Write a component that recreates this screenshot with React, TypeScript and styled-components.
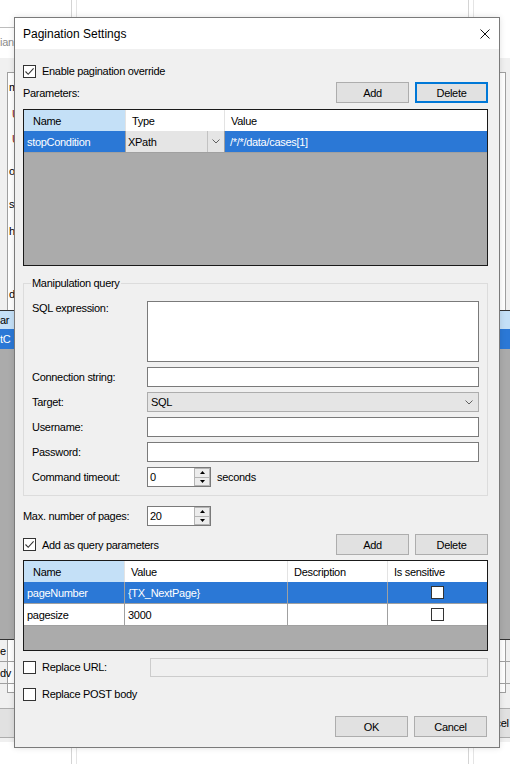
import * as React from 'react';
import styled, { createGlobalStyle } from 'styled-components';

const HIGHLIGHT = '#2b78d6';

const GlobalStyle = createGlobalStyle`
    html, body {
        margin: 0;
        padding: 0;
        background: #fff;
    }
    body {
        font-family: 'Liberation Sans', Arial, sans-serif;
        font-size: 11px;
        letter-spacing: -0.3px;
        color: #000;
    }
    * {
        box-sizing: border-box;
    }
`;

const paramCols = '102px 99px 1fr';
const queryCols = '101px 163px 100px 1fr';

const queryParams = [
    { name: 'pageNumber', value: '{TX_NextPage}', selected: true },
    { name: 'pagesize', value: '3000', selected: false },
];

// fragments of the owner window that peek out left of the dialog
const ownerLines = [
    { text: 'm', gap: 8, indent: 1, red: false },
    { text: 'U', gap: 13, indent: 4, red: true },
    { text: 'U', gap: 11, indent: 4, red: true },
    { text: 'ov', gap: 18, indent: 1, red: false },
    { text: 'se', gap: 19, indent: 1, red: false },
    { text: 'he', gap: 13, indent: 1, red: false },
    { text: 'dp', gap: 49, indent: 1, red: false },
];

const CheckMark = () => (
    <svg width="11" height="11" viewBox="0 0 11 11">
        <path d="M1.5 5.5 L4.2 8.3 L9.6 2.4" fill="none" stroke="#333" strokeWidth="1.1" />
    </svg>
);

const Chevron = () => (
    <svg width="8" height="5" viewBox="0 0 8 5">
        <path d="M0.5 0.5 L4 4 L7.5 0.5" fill="none" stroke="#606060" strokeWidth="1" />
    </svg>
);

const CheckBox: React.FC<{ checked?: boolean }> = ({ checked }) => <Box>{checked && <CheckMark />}</Box>;

const Spinner: React.FC<{ value: string }> = ({ value }) => (
    <Spin>
        <SpinValue>{value}</SpinValue>
        <SpinButtons>
            <SpinButton>
                <svg width="5" height="3" viewBox="0 0 5 3">
                    <path d="M0 3 L2.5 0 L5 3 Z" fill="#000" />
                </svg>
            </SpinButton>
            <SpinButton>
                <svg width="5" height="3" viewBox="0 0 5 3">
                    <path d="M0 0 L2.5 3 L5 0 Z" fill="#000" />
                </svg>
            </SpinButton>
        </SpinButtons>
    </Spin>
);

const Owner: React.FC = () => (
    <Backdrop>
        <TopBand>
            <OwnerTab>
                <OwnerTabEdge />
                <OwnerTabText>ian</OwnerTabText>
            </OwnerTab>
            <Rail $offset={57} />
            <Rail $offset={391} />
        </TopBand>
        <OwnerBody>
            <OwnerFrame>
                <OwnerProps>
                    {ownerLines.map((line, i) => (
                        <OwnerLine key={i} $gap={line.gap} $indent={line.indent} $red={line.red}>
                            {line.text}
                        </OwnerLine>
                    ))}
                </OwnerProps>
                <OwnerGrid>
                    <OwnerGridHeader>
                        <OwnerClip>ar</OwnerClip>
                    </OwnerGridHeader>
                    <OwnerGridRow>
                        <OwnerClip>tC</OwnerClip>
                    </OwnerGridRow>
                    <OwnerGridEmpty />
                    <OwnerGridLine>
                        <OwnerClip>e</OwnerClip>
                    </OwnerGridLine>
                    <OwnerGridLine>
                        <OwnerClip>dv</OwnerClip>
                    </OwnerGridLine>
                </OwnerGrid>
            </OwnerFrame>
            <OwnerButtons>
                <OwnerButton />
                <OwnerButton>Cancel</OwnerButton>
            </OwnerButtons>
        </OwnerBody>
        <BottomBand>
            <Rail $offset={71} />
            <Rail $offset={391} />
        </BottomBand>
    </Backdrop>
);

const App: React.FC = () => (
    <Page>
        <GlobalStyle />
        <Owner />
        <Dialog>
            <TitleBar>
                <Title>Pagination Settings</Title>
                <svg width="10" height="10" viewBox="0 0 10 10">
                    <path d="M0.5 0.5 L9.5 9.5 M9.5 0.5 L0.5 9.5" stroke="#111" strokeWidth="1" />
                </svg>
            </TitleBar>
            <Body>
                <CheckRow $gap={15}>
                    <CheckBox checked />
                    Enable pagination override
                </CheckRow>

                <ActionRow $gap={4}>
                    <span>Parameters:</span>
                    <ButtonPair>
                        <Button>Add</Button>
                        <Button $default>Delete</Button>
                    </ButtonPair>
                </ActionRow>

                <GridFrame $height={157} $gap={6}>
                    <GridRow $cols={paramCols} $header>
                        <HeaderCell $active>Name</HeaderCell>
                        <HeaderCell>Type</HeaderCell>
                        <HeaderCell>Value</HeaderCell>
                    </GridRow>
                    <GridRow $cols={paramCols}>
                        <Cell $selected>stopCondition</Cell>
                        <ComboCell>
                            <ComboText>XPath</ComboText>
                            <ComboArrow>
                                <Chevron />
                            </ComboArrow>
                        </ComboCell>
                        <Cell $selected $pad={5}>
                            /*/*/data/cases[1]
                        </Cell>
                    </GridRow>
                </GridFrame>

                <GroupBox>
                    <Legend>Manipulation query</Legend>
                    <Form>
                        <FieldLabel $top>SQL expression:</FieldLabel>
                        <TextArea />
                        <FieldLabel>Connection string:</FieldLabel>
                        <TextBox />
                        <FieldLabel>Target:</FieldLabel>
                        <Select>
                            <span>SQL</span>
                            <Chevron />
                        </Select>
                        <FieldLabel>Username:</FieldLabel>
                        <TextBox />
                        <FieldLabel>Password:</FieldLabel>
                        <TextBox />
                        <FieldLabel>Command timeout:</FieldLabel>
                        <SpinLine>
                            <Spinner value="0" />
                            <span>seconds</span>
                        </SpinLine>
                    </Form>
                </GroupBox>

                <PagesRow>
                    <PagesLabel>Max. number of pages:</PagesLabel>
                    <Spinner value="20" />
                </PagesRow>

                <ActionRow $gap={8}>
                    <CheckLine>
                        <CheckBox checked />
                        Add as query parameters
                    </CheckLine>
                    <ButtonPair>
                        <Button>Add</Button>
                        <Button>Delete</Button>
                    </ButtonPair>
                </ActionRow>

                <GridFrame $height={91} $gap={5}>
                    <GridRow $cols={queryCols} $header>
                        <HeaderCell $active>Name</HeaderCell>
                        <HeaderCell>Value</HeaderCell>
                        <HeaderCell>Description</HeaderCell>
                        <HeaderCell>Is sensitive</HeaderCell>
                    </GridRow>
                    {queryParams.map(param => (
                        <GridRow key={param.name} $cols={queryCols}>
                            <Cell $selected={param.selected}>{param.name}</Cell>
                            <Cell $selected={param.selected}>{param.value}</Cell>
                            <Cell $selected={param.selected} />
                            <Cell $selected={param.selected} $center>
                                <CheckBox />
                            </Cell>
                        </GridRow>
                    ))}
                </GridFrame>

                <ReplaceRow>
                    <CheckLine>
                        <CheckBox />
                        Replace URL:
                    </CheckLine>
                    <DisabledBox />
                </ReplaceRow>

                <CheckRow $gap={10}>
                    <CheckBox />
                    Replace POST body
                </CheckRow>

                <Footer>
                    <Button>OK</Button>
                    <Button>Cancel</Button>
                </Footer>
            </Body>
        </Dialog>
    </Page>
);

const Page = styled.div`
    position: relative;
    width: 510px;
    height: 764px;
    overflow: hidden;
    background: #fff;
`;

/* window behind the dialog */

const Backdrop = styled.div`
    display: flex;
    flex-direction: column;
    height: 100%;
`;

const TopBand = styled.div`
    height: 58px;
    flex: none;
    display: flex;
`;

const BottomBand = styled.div`
    flex: 1;
    display: flex;
`;

const Rail = styled.div<{ $offset: number }>`
    width: 6px;
    flex: none;
    margin-left: ${p => p.$offset}px;
    border-left: 1px solid #d4d4d4;
    border-right: 1px solid #e4e4e4;
`;

const OwnerTab = styled.div`
    width: 14px;
    flex: none;
    display: flex;
    flex-direction: column;
`;

const OwnerTabEdge = styled.div`
    height: 28px;
    border-bottom: 1px solid #bdbdbd;
`;

const OwnerTabText = styled.div`
    padding-top: 8px;
    white-space: nowrap;
    overflow: hidden;
    color: #8c8c8c;
`;

const OwnerBody = styled.div`
    height: 684px;
    flex: none;
    background: #f0f0f0;
    padding-top: 14px;
    display: flex;
    flex-direction: column;
`;

const OwnerFrame = styled.div`
    height: 621px;
    margin: 0 4px 0 7px;
    border: 1px solid #a0a0a0;
    background: #fff;
    display: flex;
    flex-direction: column;
`;

const OwnerProps = styled.div`
    width: 6px;
    height: 229px;
    overflow: hidden;
    display: flex;
    flex-direction: column;
`;

const OwnerLine = styled.div<{ $gap: number; $indent: number; $red: boolean }>`
    height: 14px;
    margin-top: ${p => p.$gap}px;
    padding-left: ${p => p.$indent}px;
    color: ${p => (p.$red ? '#8b1a1a' : '#000')};
    white-space: nowrap;
`;

const OwnerGrid = styled.div`
    margin: 8px -5px 0 -8px;
    display: flex;
    flex-direction: column;
    border-top: 1px solid #333;
`;

const OwnerClip = styled.span`
    width: 14px;
    overflow: hidden;
    white-space: nowrap;
`;

const OwnerGridHeader = styled.div`
    height: 18px;
    background: #c4e0f7;
    display: flex;
    align-items: center;
`;

const OwnerGridRow = styled.div`
    height: 20px;
    background: ${HIGHLIGHT};
    color: #fff;
    display: flex;
    align-items: center;
`;

const OwnerGridEmpty = styled.div`
    height: 291px;
    background: #ababab;
    border-bottom: 1px solid #333;
`;

const OwnerGridLine = styled.div`
    height: 22px;
    border-bottom: 1px solid #a0a0a0;
    display: flex;
    align-items: center;
`;

const OwnerButtons = styled.div`
    margin: 15px -20px 0 -40px;
    display: flex;
    justify-content: space-between;
`;

const OwnerButton = styled.div`
    width: 75px;
    height: 30px;
    background: #e1e1e1;
    border: 1px solid #adadad;
    display: flex;
    align-items: center;
    justify-content: center;
`;

/* dialog */

const Dialog = styled.div`
    position: absolute;
    left: 14px;
    top: 17px;
    width: 486px;
    height: 731px;
    border: 1px solid #7a7a7a;
    background: #f0f0f0;
    display: flex;
    flex-direction: column;
    box-shadow: 0 0 6px rgba(0, 0, 0, 0.12);
`;

const TitleBar = styled.div`
    height: 31px;
    flex: none;
    background: #fff;
    display: flex;
    align-items: center;
    justify-content: space-between;
    padding: 0 9px 0 8px;
`;

const Title = styled.span`
    font-size: 12px;
    letter-spacing: 0;
`;

const Body = styled.div`
    flex: 1;
    display: flex;
    flex-direction: column;
    padding: 0 11px 0 8px;
`;

const CheckRow = styled.div<{ $gap: number }>`
    height: 14px;
    margin-top: ${p => p.$gap}px;
    display: flex;
    align-items: center;
    gap: 6px;
`;

const CheckLine = styled.div`
    display: flex;
    align-items: center;
    gap: 6px;
`;

const Box = styled.span`
    width: 13px;
    height: 13px;
    flex: none;
    border: 1px solid #333;
    background: #fff;
    display: inline-flex;
    align-items: center;
    justify-content: center;
`;

const ActionRow = styled.div<{ $gap: number }>`
    height: 21px;
    margin-top: ${p => p.$gap}px;
    display: flex;
    align-items: center;
    justify-content: space-between;
`;

const ButtonPair = styled.div`
    display: flex;
    gap: 6px;
`;

const Button = styled.button<{ $default?: boolean }>`
    width: 73px;
    height: 21px;
    padding: 0;
    font: inherit;
    letter-spacing: inherit;
    color: #000;
    background: #e1e1e1;
    border: 1px solid ${p => (p.$default ? '#0078d7' : '#adadad')};
    box-shadow: ${p => (p.$default ? 'inset 0 0 0 1px #0078d7' : 'none')};
`;

const GridFrame = styled.div<{ $height: number; $gap: number }>`
    height: ${p => p.$height}px;
    margin-top: ${p => p.$gap}px;
    flex: none;
    border: 1px solid #1a1a1a;
    background: #ababab;
    display: flex;
    flex-direction: column;
`;

const GridRow = styled.div<{ $cols: string; $header?: boolean }>`
    display: grid;
    grid-template-columns: ${p => p.$cols};
    height: ${p => (p.$header ? 21 : 22)}px;
    flex: none;
    background: #fff;
`;

const HeaderCell = styled.div<{ $active?: boolean }>`
    display: flex;
    align-items: center;
    padding-left: 6px;
    background: ${p => (p.$active ? '#c4e0f7' : '#fff')};
    border-right: 1px solid #e3e3e3;
    white-space: nowrap;
    &:first-child {
        padding-left: 9px;
    }
    &:last-child {
        border-right: none;
    }
`;

const Cell = styled.div<{ $selected?: boolean; $center?: boolean; $pad?: number }>`
    display: flex;
    align-items: center;
    justify-content: ${p => (p.$center ? 'center' : 'flex-start')};
    padding-left: ${p => (p.$center ? 0 : p.$pad ?? 3)}px;
    background: ${p => (p.$selected ? HIGHLIGHT : '#fff')};
    color: ${p => (p.$selected ? '#fff' : '#000')};
    border-right: 1px solid #a0a0a0;
    border-bottom: 1px solid #a0a0a0;
    white-space: nowrap;
    overflow: hidden;
    &:last-child {
        border-right: none;
    }
`;

const ComboCell = styled.div`
    display: flex;
    background: #e5e5e5;
    border-right: 1px solid #a0a0a0;
    border-bottom: 1px solid #a0a0a0;
`;

const ComboText = styled.span`
    flex: 1;
    display: flex;
    align-items: center;
    padding-left: 2px;
`;

const ComboArrow = styled.span`
    width: 17px;
    border-left: 1px solid #c2c2c2;
    display: flex;
    align-items: center;
    justify-content: center;
`;

const GroupBox = styled.fieldset`
    margin: 10px 0 0;
    padding: 11px 8px 8px;
    border: 1px solid #dcdcdc;
    min-width: 0;
`;

const Legend = styled.legend`
    padding: 0 1px;
    margin-left: -1px;
    line-height: 14px;
`;

const Form = styled.div`
    display: grid;
    grid-template-columns: 115px 1fr;
    row-gap: 5px;
    align-items: center;
`;

const FieldLabel = styled.span<{ $top?: boolean }>`
    align-self: ${p => (p.$top ? 'start' : 'center')};
    padding-top: ${p => (p.$top ? 1 : 0)}px;
    white-space: nowrap;
`;

const TextBox = styled.div`
    height: 20px;
    border: 1px solid #7a7a7a;
    background: #fff;
`;

const TextArea = styled(TextBox)`
    height: 61px;
`;

const Select = styled.div`
    height: 20px;
    border: 1px solid #adadad;
    background: #e5e5e5;
    display: flex;
    align-items: center;
    justify-content: space-between;
    padding: 0 5px 0 3px;
`;

const SpinLine = styled.div`
    display: flex;
    align-items: center;
    gap: 6px;
`;

const Spin = styled.div`
    width: 64px;
    height: 20px;
    border: 1px solid #7a7a7a;
    background: #fff;
    display: flex;
`;

const SpinValue = styled.span`
    flex: 1;
    display: flex;
    align-items: center;
    padding-left: 2px;
`;

const SpinButtons = styled.span`
    width: 16px;
    display: flex;
    flex-direction: column;
`;

const SpinButton = styled.span`
    flex: 1;
    background: #ececec;
    border: 1px solid #b4b4b4;
    display: flex;
    align-items: center;
    justify-content: center;
    & + & {
        border-top: none;
    }
`;

const PagesRow = styled.div`
    margin-top: 10px;
    display: flex;
    align-items: center;
`;

const PagesLabel = styled.span`
    width: 124px;
`;

const ReplaceRow = styled.div`
    margin-top: 6px;
    height: 20px;
    display: grid;
    grid-template-columns: 127px 1fr;
    align-items: center;
`;

const DisabledBox = styled.div`
    height: 19px;
    border: 1px solid #cccccc;
    background: #f0f0f0;
`;

const Footer = styled.div`
    margin-top: 15px;
    margin-right: 1px;
    display: flex;
    justify-content: flex-end;
    gap: 6px;
`;

export default App;
